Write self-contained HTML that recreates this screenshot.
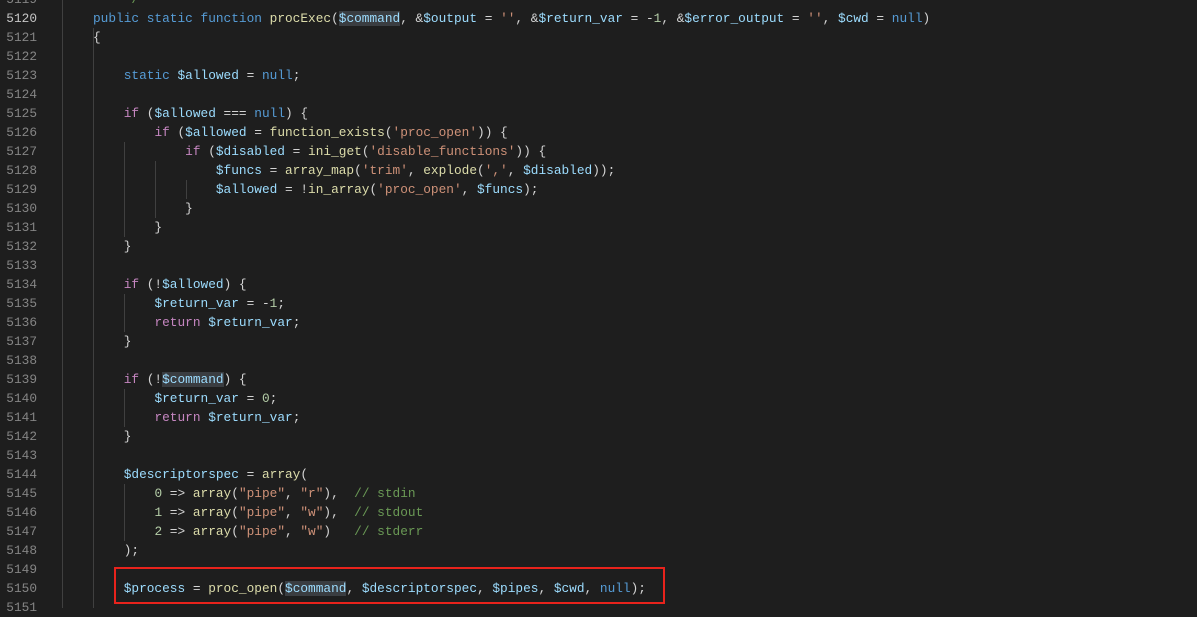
<!DOCTYPE html>
<html><head><meta charset="utf-8"><style>
body{margin:0;background:#1e1e1e;width:1197px;height:608px;overflow:hidden;position:relative;font-family:"Liberation Mono",monospace;font-size:12.8px}
.l{position:absolute;left:0;height:19px;line-height:19px;white-space:pre;width:1197px}
.n{position:absolute;left:0;width:37px;text-align:right;color:#858585}
.c{position:absolute;left:93px;color:#d4d4d4}
.k{color:#569cd6}.p{color:#c586c0}.v{color:#9cdcfe}.f{color:#dcdcaa}.s{color:#ce9178}.m{color:#6a9955}.d{color:#b5cea8}
.h{background:#3a3d41}
.g{position:absolute;width:1px;background:#404040}
</style></head><body>
<div class="g" style="left:62px;top:0;height:608px"></div>
<div class="g" style="left:93px;top:28px;height:580px"></div>
<div class="g" style="left:124px;top:142px;height:95px"></div>
<div class="g" style="left:155px;top:161px;height:57px"></div>
<div class="g" style="left:186px;top:180px;height:19px"></div>
<div class="g" style="left:124px;top:294px;height:38px"></div>
<div class="g" style="left:124px;top:389px;height:38px"></div>
<div class="g" style="left:124px;top:484px;height:57px"></div>
<div class="g" style="left:93px;top:-10px;height:10px"></div>
<div class="l" style="top:-10px"><span class="n">5119</span><span class="c">    <span class="m">*/</span></span></div>
<div class="l" style="top:9px"><span class="n" style="color:#c6c6c6">5120</span><span class="c"><span class="k">public static function</span> <span class="f">procExec</span>(<span class="v h">$command</span>, &amp;<span class="v">$output</span> = <span class="s">''</span>, &amp;<span class="v">$return_var</span> = -<span class="d">1</span>, &amp;<span class="v">$error_output</span> = <span class="s">''</span>, <span class="v">$cwd</span> = <span class="k">null</span>)</span></div>
<div class="l" style="top:28px"><span class="n">5121</span><span class="c">{</span></div>
<div class="l" style="top:47px"><span class="n">5122</span></div>
<div class="l" style="top:66px"><span class="n">5123</span><span class="c">    <span class="k">static</span> <span class="v">$allowed</span> = <span class="k">null</span>;</span></div>
<div class="l" style="top:85px"><span class="n">5124</span></div>
<div class="l" style="top:104px"><span class="n">5125</span><span class="c">    <span class="p">if</span> (<span class="v">$allowed</span> === <span class="k">null</span>) {</span></div>
<div class="l" style="top:123px"><span class="n">5126</span><span class="c">        <span class="p">if</span> (<span class="v">$allowed</span> = <span class="f">function_exists</span>(<span class="s">'proc_open'</span>)) {</span></div>
<div class="l" style="top:142px"><span class="n">5127</span><span class="c">            <span class="p">if</span> (<span class="v">$disabled</span> = <span class="f">ini_get</span>(<span class="s">'disable_functions'</span>)) {</span></div>
<div class="l" style="top:161px"><span class="n">5128</span><span class="c">                <span class="v">$funcs</span> = <span class="f">array_map</span>(<span class="s">'trim'</span>, <span class="f">explode</span>(<span class="s">','</span>, <span class="v">$disabled</span>));</span></div>
<div class="l" style="top:180px"><span class="n">5129</span><span class="c">                <span class="v">$allowed</span> = !<span class="f">in_array</span>(<span class="s">'proc_open'</span>, <span class="v">$funcs</span>);</span></div>
<div class="l" style="top:199px"><span class="n">5130</span><span class="c">            }</span></div>
<div class="l" style="top:218px"><span class="n">5131</span><span class="c">        }</span></div>
<div class="l" style="top:237px"><span class="n">5132</span><span class="c">    }</span></div>
<div class="l" style="top:256px"><span class="n">5133</span></div>
<div class="l" style="top:275px"><span class="n">5134</span><span class="c">    <span class="p">if</span> (!<span class="v">$allowed</span>) {</span></div>
<div class="l" style="top:294px"><span class="n">5135</span><span class="c">        <span class="v">$return_var</span> = -<span class="d">1</span>;</span></div>
<div class="l" style="top:313px"><span class="n">5136</span><span class="c">        <span class="p">return</span> <span class="v">$return_var</span>;</span></div>
<div class="l" style="top:332px"><span class="n">5137</span><span class="c">    }</span></div>
<div class="l" style="top:351px"><span class="n">5138</span></div>
<div class="l" style="top:370px"><span class="n">5139</span><span class="c">    <span class="p">if</span> (!<span class="v h">$command</span>) {</span></div>
<div class="l" style="top:389px"><span class="n">5140</span><span class="c">        <span class="v">$return_var</span> = <span class="d">0</span>;</span></div>
<div class="l" style="top:408px"><span class="n">5141</span><span class="c">        <span class="p">return</span> <span class="v">$return_var</span>;</span></div>
<div class="l" style="top:427px"><span class="n">5142</span><span class="c">    }</span></div>
<div class="l" style="top:446px"><span class="n">5143</span></div>
<div class="l" style="top:465px"><span class="n">5144</span><span class="c">    <span class="v">$descriptorspec</span> = <span class="f">array</span>(</span></div>
<div class="l" style="top:484px"><span class="n">5145</span><span class="c">        <span class="d">0</span> =&gt; <span class="f">array</span>(<span class="s">"pipe"</span>, <span class="s">"r"</span>),  <span class="m">// stdin</span></span></div>
<div class="l" style="top:503px"><span class="n">5146</span><span class="c">        <span class="d">1</span> =&gt; <span class="f">array</span>(<span class="s">"pipe"</span>, <span class="s">"w"</span>),  <span class="m">// stdout</span></span></div>
<div class="l" style="top:522px"><span class="n">5147</span><span class="c">        <span class="d">2</span> =&gt; <span class="f">array</span>(<span class="s">"pipe"</span>, <span class="s">"w"</span>)   <span class="m">// stderr</span></span></div>
<div class="l" style="top:541px"><span class="n">5148</span><span class="c">    );</span></div>
<div class="l" style="top:560px"><span class="n">5149</span></div>
<div class="l" style="top:579px"><span class="n">5150</span><span class="c">    <span class="v">$process</span> = <span class="f">proc_open</span>(<span class="v h">$command</span>, <span class="v">$descriptorspec</span>, <span class="v">$pipes</span>, <span class="v">$cwd</span>, <span class="k">null</span>);</span></div>
<div class="l" style="top:598px"><span class="n">5151</span></div>
<div style="position:absolute;left:114px;top:567px;width:547px;height:33px;border:2px solid #e8231c"></div>
</body></html>
